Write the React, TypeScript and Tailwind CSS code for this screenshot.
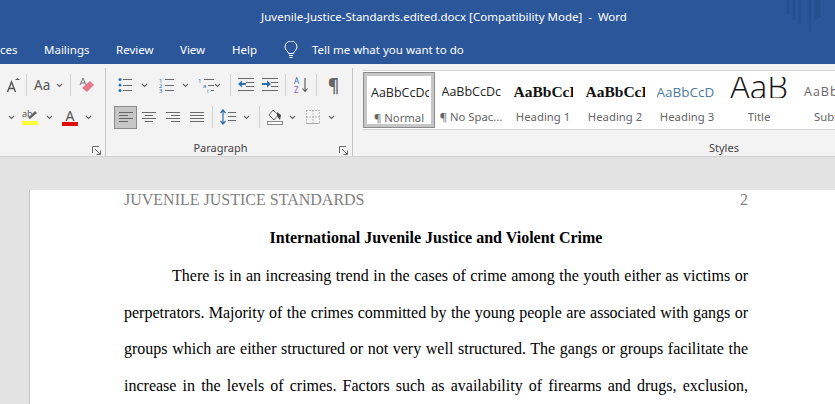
import type { ReactNode } from "react"

const ui = "font-['Noto_Sans','Open_Sans',sans-serif]"

const Chev = ({ className = "" }: { className?: string }) => (
  <svg width="7" height="5" viewBox="0 0 7 5" className={`shrink-0 ${className}`}>
    <path d="M1 1l2.5 2.5L6 1" fill="none" stroke="#666" strokeWidth="1.1" />
  </svg>
)

const Sep = ({ className = "" }: { className?: string }) => <div className={`w-px h-[22px] bg-[#d2d2d2] shrink-0 ${className}`} />

const Icon = ({ w, h = 16, className = "", children }: { w: number; h?: number; className?: string; children: ReactNode }) => (
  <svg width={w} height={h} viewBox={`0 0 ${w} ${h}`} className={`shrink-0 ${className}`}>
    {children}
  </svg>
)

const Lines = ({ rows, stroke = "#6a6a6a" }: { rows: [number, number, number][]; stroke?: string }) => (
  <>
    {rows.map(([x1, x2, y]) => (
      <path key={`${x1}-${y}`} d={`M${x1} ${y}.5H${x2}`} stroke={stroke} strokeWidth="1" />
    ))}
  </>
)

const Launcher = ({ className = "" }: { className?: string }) => (
  <svg width="10" height="10" viewBox="0 0 10 10" className={className}>
    <path d="M0.5 7V0.5H7M3 3l5 5M8.5 4.5v4h-4" fill="none" stroke="#6a6a6a" strokeWidth="1" />
  </svg>
)

const tabs = [
  { label: "ces", cls: "w-[44px]" },
  { label: "Mailings", cls: "w-[72px]" },
  { label: "Review", cls: "w-[64px]" },
  { label: "View", cls: "w-[52px]" },
  { label: "Help", cls: "w-[53px]" },
]

const styleItems = [
  { sample: "AaBbCcDc", caption: "¶ No Spac...", cls: "text-[12.5px] text-[#222] font-['Open_Sans',sans-serif] w-[59px]" },
  { sample: "AaBbCcDd", caption: "Heading 1", cls: "text-[15.5px] font-bold text-[#111] font-['Liberation_Serif',serif] w-[59px]" },
  { sample: "AaBbCcDd", caption: "Heading 2", cls: "text-[15.5px] font-bold text-[#111] font-['Liberation_Serif',serif] w-[59px]" },
  { sample: "AaBbCcD", caption: "Heading 3", cls: "text-[13.5px] text-[#4f7ba6] font-['Open_Sans',sans-serif] w-[61px]" },
]

const body = [
  "There is in an increasing trend in the cases of crime among the youth either as victims or",
  "perpetrators. Majority of the crimes committed by the young people are associated with gangs or",
  "groups which are either structured or not very well structured. The gangs or groups facilitate the",
  "increase in the levels of crimes. Factors such as availability of firearms and drugs, exclusion,",
]

export default function App() {
  return (
    <div className={`w-[835px] h-[404px] overflow-hidden bg-[#e3e3e3] ${ui}`}>
      {/* title bar */}
      <div className="relative h-[32px] bg-[#2b579a] flex items-center justify-center pl-[53px] pt-[1px] text-white text-[11.5px] whitespace-pre">
        Juvenile-Justice-Standards.edited.docx [Compatibility Mode]  -  Word
        <svg width="40" height="32" viewBox="0 0 40 32" className="absolute right-[10px] top-0">
          <path d="M3 0v14M9 0v20M15 0v24M25 0v32M31 0v20M34 0v18" stroke="#26508d" strokeWidth="3" />
        </svg>
      </div>

      {/* tabs */}
      <div className="h-[32px] pt-[3px] bg-[#2b579a] flex items-center text-white text-[11.5px]">
        {tabs.map((t) => (
          <div key={t.label} className={t.cls}>{t.label}</div>
        ))}
        <svg width="14" height="18" viewBox="0 0 14 18" className="ml-[-1px] mr-[14px]">
          <path d="M4.5 12.5C4 10 1 9 1 6a6 6 0 0 1 12 0c0 3-3 4-3.500 6.500zM5 14.500h4M5.500 16.500h3" fill="none" stroke="#fff" strokeWidth="1" />
        </svg>
        <div>Tell me what you want to do</div>
      </div>

      {/* ribbon */}
      <div className="h-[93px] bg-[#f3f3f3] border-b border-[#d0d0d0] flex text-[#444]">
        <div className="w-[106px] h-[88px] mt-[4px] border-r border-[#c6c6c6] relative pt-[4px] shrink-0">
          <div className="h-[26px] flex items-center pl-[6px]">
            <Icon w={14}>
              <path d="M1.500 15L5.500 5l4 10M3 11.500h5" fill="none" stroke="#555" strokeWidth="1.400" />
              <path d="M9 3l2.500-2L14 3z" fill="#555" />
            </Icon>
            <Sep className="ml-[6px]" />
            <span className="ml-[7px] text-[13.5px] text-[#555]">Aa</span>
            <Chev className="ml-[6px]" />
            <Sep className="ml-[7px]" />
            <Icon w={16} className="ml-[8px]">
              <path d="M1 8l3-7 3 7M2 6h4" fill="none" stroke="#777" strokeWidth="1" />
              <path d="M3 11l8-7 4 4-7 7z" fill="#e8788c" />
            </Icon>
          </div>
          <div className="h-[24px] mt-[7px] flex items-center pl-[8px]">
            <Chev />
            <Icon w={17} className="ml-[7px]">
              <text x="0" y="8" fontSize="9" fill="#555" fontFamily="Noto Sans">ab</text>
              <path d="M6 9l7-7 2 2-7 6z" fill="#666" />
              <rect x="0" y="12" width="16" height="4" fill="#ffff33" />
            </Icon>
            <Chev className="ml-[7px]" />
            <div className="ml-[9px] w-[16px] flex flex-col items-center">
              <span className="text-[14px] leading-[13px] text-[#555]">A</span>
              <div className="w-[16px] h-[4px] bg-[#e00b0b]" />
            </div>
            <Chev className="ml-[7px]" />
          </div>
          <Launcher className="absolute right-[3px] bottom-[0px]" />
        </div>

        <div className="w-[247px] h-[88px] mt-[4px] border-r border-[#c6c6c6] relative pt-[4px] shrink-0">
          <div className="h-[26px] flex items-center pl-[12px]">
            <Icon w={14}>
              <circle cx="2" cy="2.500" r="1.500" fill="#2f6fab" />
              <circle cx="2" cy="8" r="1.500" fill="#2f6fab" />
              <circle cx="2" cy="13.500" r="1.500" fill="#2f6fab" />
              <Lines rows={[[5, 14, 2], [5, 14, 8], [5, 14, 13]]} />
            </Icon>
            <Chev className="ml-[9px]" />
            <Icon w={15} className="ml-[11px]">
              <text x="0" y="6" fontSize="6" fill="#2f6fab" fontFamily="Noto Sans">1</text>
              <text x="0" y="11" fontSize="6" fill="#2f6fab" fontFamily="Noto Sans">2</text>
              <text x="0" y="16" fontSize="6" fill="#2f6fab" fontFamily="Noto Sans">3</text>
              <Lines rows={[[6, 15, 2], [6, 15, 8], [6, 15, 13]]} />
            </Icon>
            <Chev className="ml-[8px]" />
            <Icon w={16} className="ml-[9px]">
              <text x="0" y="6" fontSize="6" fill="#2f6fab" fontFamily="Noto Sans">1</text>
              <text x="5" y="11" fontSize="6" fill="#2f6fab" fontFamily="Noto Sans">a</text>
              <text x="9" y="16" fontSize="6" fill="#2f6fab" fontFamily="Noto Sans">i</text>
              <Lines rows={[[6, 16, 2], [10, 16, 8], [13, 16, 13]]} />
            </Icon>
            <Chev />
            <Sep className="ml-[9px]" />
            <Icon w={16} className="ml-[7px]">
              <Lines rows={[[0, 16, 1], [8, 16, 5], [8, 16, 9], [0, 16, 13]]} />
              <path d="M0 7l4-3.500v2.500h4v2H4v2.500z" fill="#2f6fab" />
            </Icon>
            <Icon w={16} className="ml-[8px]">
              <Lines rows={[[0, 16, 1], [9, 16, 5], [9, 16, 9], [0, 16, 13]]} />
              <path d="M9 7L5 3.500v2.500H0v2h5v2.500z" fill="#2f6fab" />
            </Icon>
            <Sep className="ml-[7px]" />
            <Icon w={15} className="ml-[8px]">
              <text x="0" y="7" fontSize="8" fill="#2f6fab" fontFamily="Noto Sans">A</text>
              <text x="0" y="15.500" fontSize="8" fill="#8a63b0" fontFamily="Noto Sans">Z</text>
              <path d="M11 1v13M8.500 11.500L11 14.500l2.500-3" fill="none" stroke="#555" strokeWidth="1.100" />
            </Icon>
            <Sep className="ml-[7px]" />
            <span className="ml-[11px] text-[17px] leading-none font-bold text-[#666]">¶</span>
          </div>
          <div className="h-[24px] mt-[7px] flex items-center pl-[8px]">
            <div className="w-[23px] h-[23px] bg-[#c6c6c6] border border-[#8c8c8c] flex items-center justify-center">
              <Icon w={14} h={12}>
                <Lines rows={[[0, 14, 1], [0, 9, 4], [0, 14, 7], [0, 9, 10]]} stroke="#666" />
              </Icon>
            </div>
            <Icon w={14} h={12} className="ml-[5px]">
              <Lines rows={[[0, 14, 1], [3, 11, 4], [0, 14, 7], [3, 11, 10]]} />
            </Icon>
            <Icon w={14} h={12} className="ml-[10px]">
              <Lines rows={[[0, 14, 1], [5, 14, 4], [0, 14, 7], [5, 14, 10]]} />
            </Icon>
            <Icon w={14} h={12} className="ml-[10px]">
              <Lines rows={[[0, 14, 1], [0, 14, 4], [0, 14, 7], [0, 14, 10]]} />
            </Icon>
            <Sep className="ml-[8px]" />
            <Icon w={16} className="ml-[7px]">
              <path d="M3 1v14M0.500 4L3 1l2.500 3M0.500 12L3 15l2.500-3" fill="none" stroke="#2f6fab" strokeWidth="1.200" />
              <Lines rows={[[8, 16, 3], [8, 16, 7], [8, 16, 11]]} />
            </Icon>
            <Chev className="ml-[7px]" />
            <Sep className="ml-[9px]" />
            <Icon w={16} className="ml-[7px]">
              <path d="M6 1l5 5-4 5-5-5z" fill="#fff" stroke="#666" />
              <path d="M10 3l4 3-1 5-3-4z" fill="#4a4a4a" />
              <rect x="0.500" y="12.500" width="15" height="3" fill="#fff" stroke="#888" />
            </Icon>
            <Chev className="ml-[6px]" />
            <Icon w={14} h={14} className="ml-[10px]">
              <path d="M.5.500h13v13H.5zM7 .5v13M.5 7h13" fill="none" stroke="#8a8a8a" strokeWidth="1" strokeDasharray="1 2" />
              <path d="M.5 13.500h13" stroke="#aaa" />
            </Icon>
            <Chev className="ml-[8px]" />
          </div>
          <div className="h-[12px] mt-[10px] text-center text-[11px] leading-[18px] pr-[17px]">Paragraph</div>
          <Launcher className="absolute right-[3px] bottom-[0px]" />
        </div>

        <div className="flex-1 min-w-0 pl-[10px] pt-[6px] relative">
          <div className="w-[472px] h-[60px] bg-white border-y border-[#d4d4d4] flex overflow-hidden">
            <div className="w-[72px] h-[56px] mt-[1px] shrink-0 border border-[#8c8c8c] outline outline-[3px] outline-offset-[-4px] outline-[#c6c6c6] flex flex-col items-center overflow-hidden">
              <div className="h-[38px] w-[58px] mt-[1px] ml-[2px] flex items-center justify-start overflow-hidden text-[12.5px] text-[#222] font-['Open_Sans',sans-serif] whitespace-nowrap">AaBbCcDc</div>
              <div className="text-[11.3px] leading-[12px] text-[#666]">¶ Normal</div>
            </div>
            {styleItems.map((s) => (
              <div key={s.caption} className="w-[72px] shrink-0 flex flex-col items-center">
                <div className={`h-[38px] mt-[2px] flex items-center overflow-hidden whitespace-nowrap ${s.cls}`}>{s.sample}</div>
                <div className="text-[11.3px] leading-[12px] text-[#666] whitespace-nowrap">{s.caption}</div>
              </div>
            ))}
            <div className="w-[72px] shrink-0 flex flex-col items-center">
              <div className="h-[40px] pt-[6px]">
                <div className="h-[21px] overflow-hidden text-[33px] leading-[20px] text-[#111] font-['Open_Sans',sans-serif] font-light">AaB</div>
              </div>
              <div className="text-[11.3px] leading-[12px] text-[#666]">Title</div>
            </div>
            <div className="w-[72px] shrink-0 flex flex-col pl-[9px]">
              <div className="h-[38px] mt-[2px] flex items-center text-[12.5px] tracking-[1px] text-[#666] font-['Open_Sans',sans-serif]">AaBb</div>
              <div className="pl-[10px] text-[11.3px] leading-[12px] text-[#666]">Subtitle</div>
            </div>
          </div>
          <div className="absolute left-[356px] top-[75px] text-[11px] leading-[18px]">Styles</div>
        </div>
      </div>

      {/* document */}
      <div className="pl-[29px] pt-[33px]">
        <div className="w-[806px] h-[300px] bg-white border-l border-[#c6c6c6] pt-[1px] pl-[94px] pr-[87px] font-['Liberation_Serif',serif] text-[16px] text-black">
          <div className="flex justify-between text-[#7f7f7f] leading-[18px]">
            <span>JUVENILE JUSTICE STANDARDS</span>
            <span>2</span>
          </div>
          <div className="mt-[20px] text-center font-bold leading-[18px]">International Juvenile Justice and Violent Crime</div>
          <div className="mt-[11px]">
            {body.map((line, i) => (
              <div key={i} className={`h-[36.7px] leading-[36.7px] [text-align:justify] [text-align-last:justify] ${i === 0 ? "pl-[48px]" : ""}`}>
                {line}
              </div>
            ))}
          </div>
        </div>
      </div>
    </div>
  )
}
